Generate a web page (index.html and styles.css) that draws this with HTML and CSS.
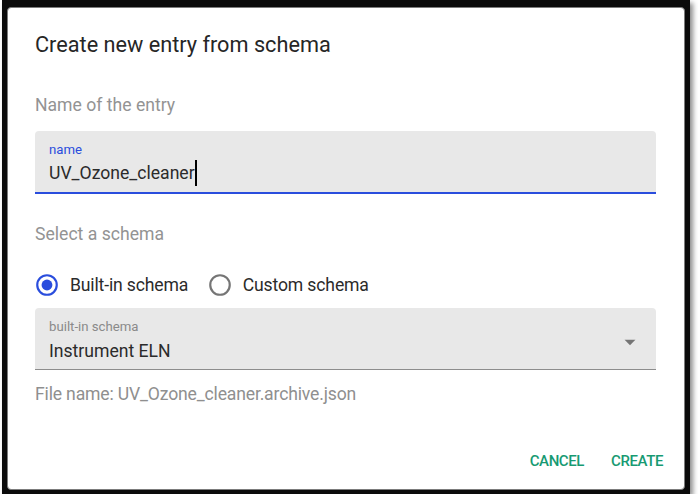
FILE: index.html
```html
<!DOCTYPE html>
<html lang="en">
<head>
<meta charset="utf-8">
<title>Create new entry from schema</title>
<link rel="stylesheet" href="styles.css">
</head>
<body>
<div class="frame">
  <div class="dialog">
    <h2 class="title">Create new entry from schema</h2>
    <div class="content">
      <div class="section-label first">Name of the entry</div>
      <div class="field filled focused">
        <div class="field-label">name</div>
        <div class="field-value">UV_Ozone_cleaner<span class="caret"></span></div>
      </div>
      <div class="section-label second">Select a schema</div>
      <div class="radio-row">
        <label class="radio-label">
          <span class="radio checked">
            <svg viewBox="0 0 24 24" width="26" height="26"><circle cx="12" cy="12" r="9" fill="none" stroke="currentColor" stroke-width="2"/><circle cx="12" cy="12" r="5" fill="currentColor"/></svg>
          </span>
          <span class="radio-text">Built-in schema</span>
        </label>
        <label class="radio-label">
          <span class="radio">
            <svg viewBox="0 0 24 24" width="26" height="26"><circle cx="12" cy="12" r="9" fill="none" stroke="currentColor" stroke-width="2"/></svg>
          </span>
          <span class="radio-text">Custom schema</span>
        </label>
      </div>
      <div class="field select">
        <div class="field-label">built-in schema</div>
        <div class="field-value">Instrument ELN</div>
        <svg class="arrow" viewBox="0 0 24 24" width="26" height="26"><path d="M7 10l5 5 5-5z" fill="currentColor"/></svg>
      </div>
      <div class="helper">File name: UV_Ozone_cleaner.archive.json</div>
    </div>
    <div class="actions">
      <button class="btn">CANCEL</button>
      <button class="btn">CREATE</button>
    </div>
  </div>
</div>
</body>
</html>
```

FILE: styles.css
```css
html, body {
  margin: 0;
  padding: 0;
  background: #ffffff;
}

body {
  font-family: Roboto, "Noto Sans", sans-serif;
  color: #262626;
}

.frame {
  box-sizing: border-box;
  margin-left: 2px;
  width: 688px;
  height: 494px;
  padding: 7px 5px 4px 5px;
  background: #0b0b0b;
  box-shadow: 3px 3px 5px rgba(0, 0, 0, 0.45);
}

.dialog {
  box-sizing: border-box;
  height: 100%;
  background: #ffffff;
  border: 1px solid #7c7c7c;
  border-radius: 4px;
  display: flex;
  flex-direction: column;
}

.title {
  margin: 0;
  padding: 21px 27px 0 27px;
  font-size: 21.7px;
  line-height: 32px;
  font-weight: 400;
  color: #262626;
}

.content {
  padding: 0 28px 0 27px;
}

.section-label {
  font-size: 17.6px;
  line-height: 24px;
  color: #939393;
}

.section-label.first {
  margin-top: 32px;
}

.section-label.second {
  margin-top: 28px;
}

.field {
  position: relative;
  box-sizing: border-box;
  background: #e8e8e8;
  border-radius: 4px 4px 0 0;
  padding: 10.5px 15px 0 14px;
}

.field.filled {
  margin-top: 14px;
  height: 63px;
  border-bottom: 2px solid #2a4ddd;
}

.field-label {
  font-size: 13.2px;
  line-height: 16px;
  color: #8a8a8a;
}

.focused .field-label {
  color: #2a4ddd;
}

.field-value {
  font-size: 17.6px;
  line-height: 24px;
  color: #2b2b2b;
  margin-top: 2.5px;
  display: flex;
  align-items: center;
}

.caret {
  display: inline-block;
  width: 2px;
  height: 26px;
  background: #000;
  margin-left: 0;
}

.select {
  height: 62px;
  border-bottom: 1px solid #8d8d8d;
}

.select .field-value {
  margin-top: 4px;
}

.arrow {
  position: absolute;
  right: 13px;
  top: 21px;
  color: #757575;
}

.radio-row {
  margin-top: 16px;
  height: 46px;
  display: flex;
  align-items: center;
}

.radio-label {
  display: flex;
  align-items: center;
  margin-left: -12px;
  margin-right: 20.5px;
}

.radio-label:first-child {
  margin-left: -11px;
}

.radio {
  width: 46px;
  height: 46px;
  display: flex;
  align-items: center;
  justify-content: center;
  color: #757575;
}

.radio.checked {
  color: #2a4ddd;
}

.radio-text {
  font-size: 17.6px;
  line-height: 24px;
  color: #2b2b2b;
  letter-spacing: -0.15px;
}

.helper {
  margin-top: 12px;
  font-size: 17.6px;
  line-height: 24px;
  color: #8f8f8f;
  letter-spacing: -0.17px;
}

.actions {
  margin-top: auto;
  display: flex;
  justify-content: flex-end;
  padding: 9px 12px 9px 9px;
}

.btn {
  font-family: inherit;
  font-size: 15px;
  line-height: 24px;
  font-weight: 500;
  color: #179a72;
  background: transparent;
  border: none;
  padding: 6.6px 9px;
  margin-left: 9px;
  letter-spacing: -0.4px;
}
```
